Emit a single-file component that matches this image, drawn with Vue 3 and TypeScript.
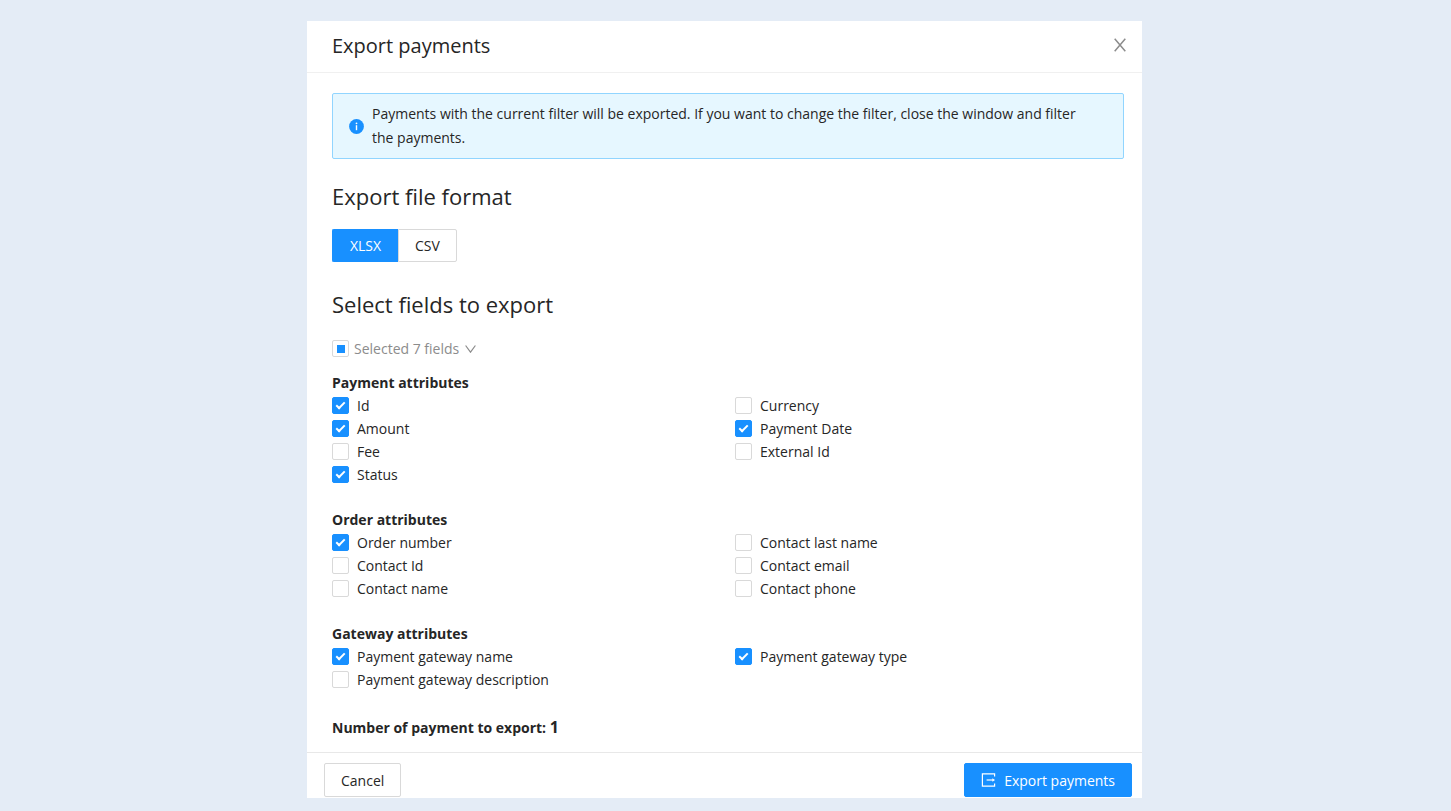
<script setup lang="ts">
import { computed, reactive, ref } from 'vue'

interface Field {
  id: string
  label: string
  checked: boolean
}

interface Group {
  title: string
  columns: Field[][]
}

const field = (id: string, label: string, checked = false): Field => ({ id, label, checked })

const format = ref<'XLSX' | 'CSV'>('XLSX')
const formats = ['XLSX', 'CSV'] as const

const groups = reactive<Group[]>([
  {
    title: 'Payment attributes',
    columns: [
      [
        field('id', 'Id', true),
        field('amount', 'Amount', true),
        field('fee', 'Fee'),
        field('status', 'Status', true),
      ],
      [
        field('currency', 'Currency'),
        field('payment-date', 'Payment Date', true),
        field('external-id', 'External Id'),
      ],
    ],
  },
  {
    title: 'Order attributes',
    columns: [
      [
        field('order-number', 'Order number', true),
        field('contact-id', 'Contact Id'),
        field('contact-name', 'Contact name'),
      ],
      [
        field('contact-last-name', 'Contact last name'),
        field('contact-email', 'Contact email'),
        field('contact-phone', 'Contact phone'),
      ],
    ],
  },
  {
    title: 'Gateway attributes',
    columns: [
      [
        field('gateway-name', 'Payment gateway name', true),
        field('gateway-description', 'Payment gateway description'),
      ],
      [field('gateway-type', 'Payment gateway type', true)],
    ],
  },
])

const fields = computed(() => groups.flatMap((g) => g.columns.flat()))
const selected = computed(() => fields.value.filter((f) => f.checked).length)
const allSelected = computed(() => selected.value === fields.value.length)
const someSelected = computed(() => selected.value > 0 && !allSelected.value)

function toggleAll(event: Event) {
  const on = (event.target as HTMLInputElement).checked
  fields.value.forEach((f) => (f.checked = on))
}
</script>

<template>
  <main class="page">
    <section class="modal" role="dialog" aria-labelledby="dialog-title">
      <header class="header">
        <h1 id="dialog-title" class="title">Export payments</h1>
        <button class="close" type="button" aria-label="Close">
          <svg width="12" height="14" viewBox="0 0 12 14" fill="none" stroke="currentColor" stroke-width="1.5">
            <path d="M0.7 0.8 11.3 13.2M11.3 0.8 0.7 13.2" />
          </svg>
        </button>
      </header>

      <div class="body">
        <div class="alert" role="note">
          <svg class="info" width="15" height="15" viewBox="0 0 15 15">
            <circle cx="7.5" cy="7.5" r="7.4" fill="#1890ff" />
            <rect x="6.8" y="6.2" width="1.4" height="5" fill="#fff" />
            <circle cx="7.5" cy="4.3" r="0.9" fill="#fff" />
          </svg>
          <p class="message">
            Payments with the current filter will be exported. If you want to change the filter, close
            the window and filter the payments.
          </p>
        </div>

        <h2 class="heading">Export file format</h2>
        <div class="formats" role="group" aria-label="Export file format">
          <button
            v-for="name in formats"
            :key="name"
            type="button"
            class="format"
            :class="{ active: format === name }"
            :aria-pressed="format === name"
            @click="format = name"
          >
            {{ name }}
          </button>
        </div>

        <h2 class="heading">Select fields to export</h2>
        <div class="summary">
          <input
            class="box"
            type="checkbox"
            aria-label="Select all fields"
            :checked="allSelected"
            :indeterminate="someSelected"
            @change="toggleAll"
          />
          <button class="dropdown" type="button">
            Selected {{ selected }} fields
            <svg width="11" height="8" viewBox="0 0 11 8" fill="none" stroke="currentColor" stroke-width="1.2">
              <path d="M0.6 0.5 5.5 7.2 10.4 0.5" />
            </svg>
          </button>
        </div>

        <section v-for="group in groups" :key="group.title" class="group">
          <h3 class="strong">{{ group.title }}</h3>
          <div class="columns">
            <div v-for="(column, i) in group.columns" :key="i">
              <label v-for="item in column" :key="item.id" class="option" :for="item.id">
                <input :id="item.id" v-model="item.checked" class="box" type="checkbox" />
                <span>{{ item.label }}</span>
              </label>
            </div>
          </div>
        </section>

        <p class="strong total">Number of payment to export: <span class="count">1</span></p>
      </div>

      <footer class="footer">
        <button class="button" type="button">Cancel</button>
        <button class="button primary" type="button">
          <svg width="15" height="14" viewBox="0 0 15 14" fill="none" stroke="currentColor" stroke-width="1.2">
            <path d="M13.6 3.6V0.8H1.4V13.2H13.6V10.4" />
            <path d="M5.6 7H12" />
            <path d="M11.4 5.2 14 7 11.4 8.8Z" fill="currentColor" stroke="none" />
          </svg>
          Export payments
        </button>
      </footer>
    </section>
  </main>
</template>

<style>
body {
  margin: 0;
  background: #e4ecf6;
}
</style>

<style scoped>
.page {
  box-sizing: border-box;
  min-height: 100vh;
  padding: 21px 2px 13px 0;
  color: #262626;
  font-family: "Open Sans", "Noto Sans", sans-serif;
  font-size: 14px;
  line-height: 23px;
}

h1,
h2,
h3,
p {
  margin: 0;
}

button {
  font: inherit;
  color: inherit;
  cursor: pointer;
}

.modal {
  max-width: 835px;
  margin: 0 auto;
  background: #fff;
}

.header {
  display: flex;
  align-items: flex-start;
  justify-content: space-between;
  padding: 11px 14px 12px 25px;
  border-bottom: 1px solid #f0f0f0;
}

.title {
  font-size: 20px;
  line-height: 28px;
  font-weight: 400;
}

.close {
  display: flex;
  padding: 6px 2px;
  border: 0;
  background: none;
  color: #8c8c8c;
}

.body {
  padding: 20px 18px 13px 25px;
}

.alert {
  display: flex;
  align-items: center;
  gap: 8px;
  padding: 8px 32px 8px 16px;
  border: 1px solid #91d5ff;
  border-radius: 2px;
  background: #e6f7ff;
}

.info {
  flex: none;
}

.message {
  line-height: 24px;
}

.heading {
  margin: 21px 0 17px;
  font-size: 22px;
  line-height: 32px;
  font-weight: 400;
}

.formats {
  display: flex;
  margin-bottom: 26px;
}

.format {
  padding: 4px 16px;
  border: 1px solid #d9d9d9;
  background: #fff;
}

.format:first-child {
  min-width: 66px;
  border-right: 0;
  border-radius: 2px 0 0 2px;
}

.format:last-child {
  border-radius: 0 2px 2px 0;
}

.format.active {
  border-color: #1890ff;
  background: #1890ff;
  color: #fff;
}

.summary {
  display: flex;
  align-items: center;
  gap: 5px;
  margin-bottom: 11px;
}

.dropdown {
  display: flex;
  align-items: center;
  gap: 6px;
  padding: 0;
  border: 0;
  background: none;
  color: #8c8c8c;
}

.group {
  margin-bottom: 22px;
}

.strong {
  font-size: 14px;
  line-height: 23px;
  font-weight: 700;
}

.columns {
  display: grid;
  grid-template-columns: 1fr 1fr;
  gap: 14px;
}

.option {
  display: flex;
  align-items: center;
  gap: 8px;
}

.box {
  display: flex;
  flex: none;
  align-items: center;
  justify-content: center;
  box-sizing: border-box;
  width: 17px;
  height: 17px;
  margin: 0;
  border: 1px solid #d9d9d9;
  border-radius: 2px;
  background: #fff;
  appearance: none;
}

.box:checked {
  border-color: #1890ff;
  background: #1890ff;
}

.box:checked::after {
  content: "";
  width: 3px;
  height: 7px;
  margin-bottom: 2px;
  border: solid #fff;
  border-width: 0 2px 2px 0;
  transform: rotate(45deg);
}

.box:indeterminate::after {
  content: "";
  width: 8px;
  height: 8px;
  background: #1890ff;
}

.total {
  padding-top: 3px;
}

.count {
  font-size: 16px;
}

.footer {
  display: flex;
  justify-content: space-between;
  padding: 10px 10px 1px 17px;
  border-top: 1px solid #e8e8e8;
}

.button {
  display: flex;
  align-items: center;
  gap: 8px;
  box-sizing: border-box;
  height: 34px;
  padding: 0 16px;
  border: 1px solid #d9d9d9;
  border-radius: 2px;
  background: #fff;
}

.primary {
  border-color: #1890ff;
  background: #1890ff;
  color: #fff;
}
</style>
